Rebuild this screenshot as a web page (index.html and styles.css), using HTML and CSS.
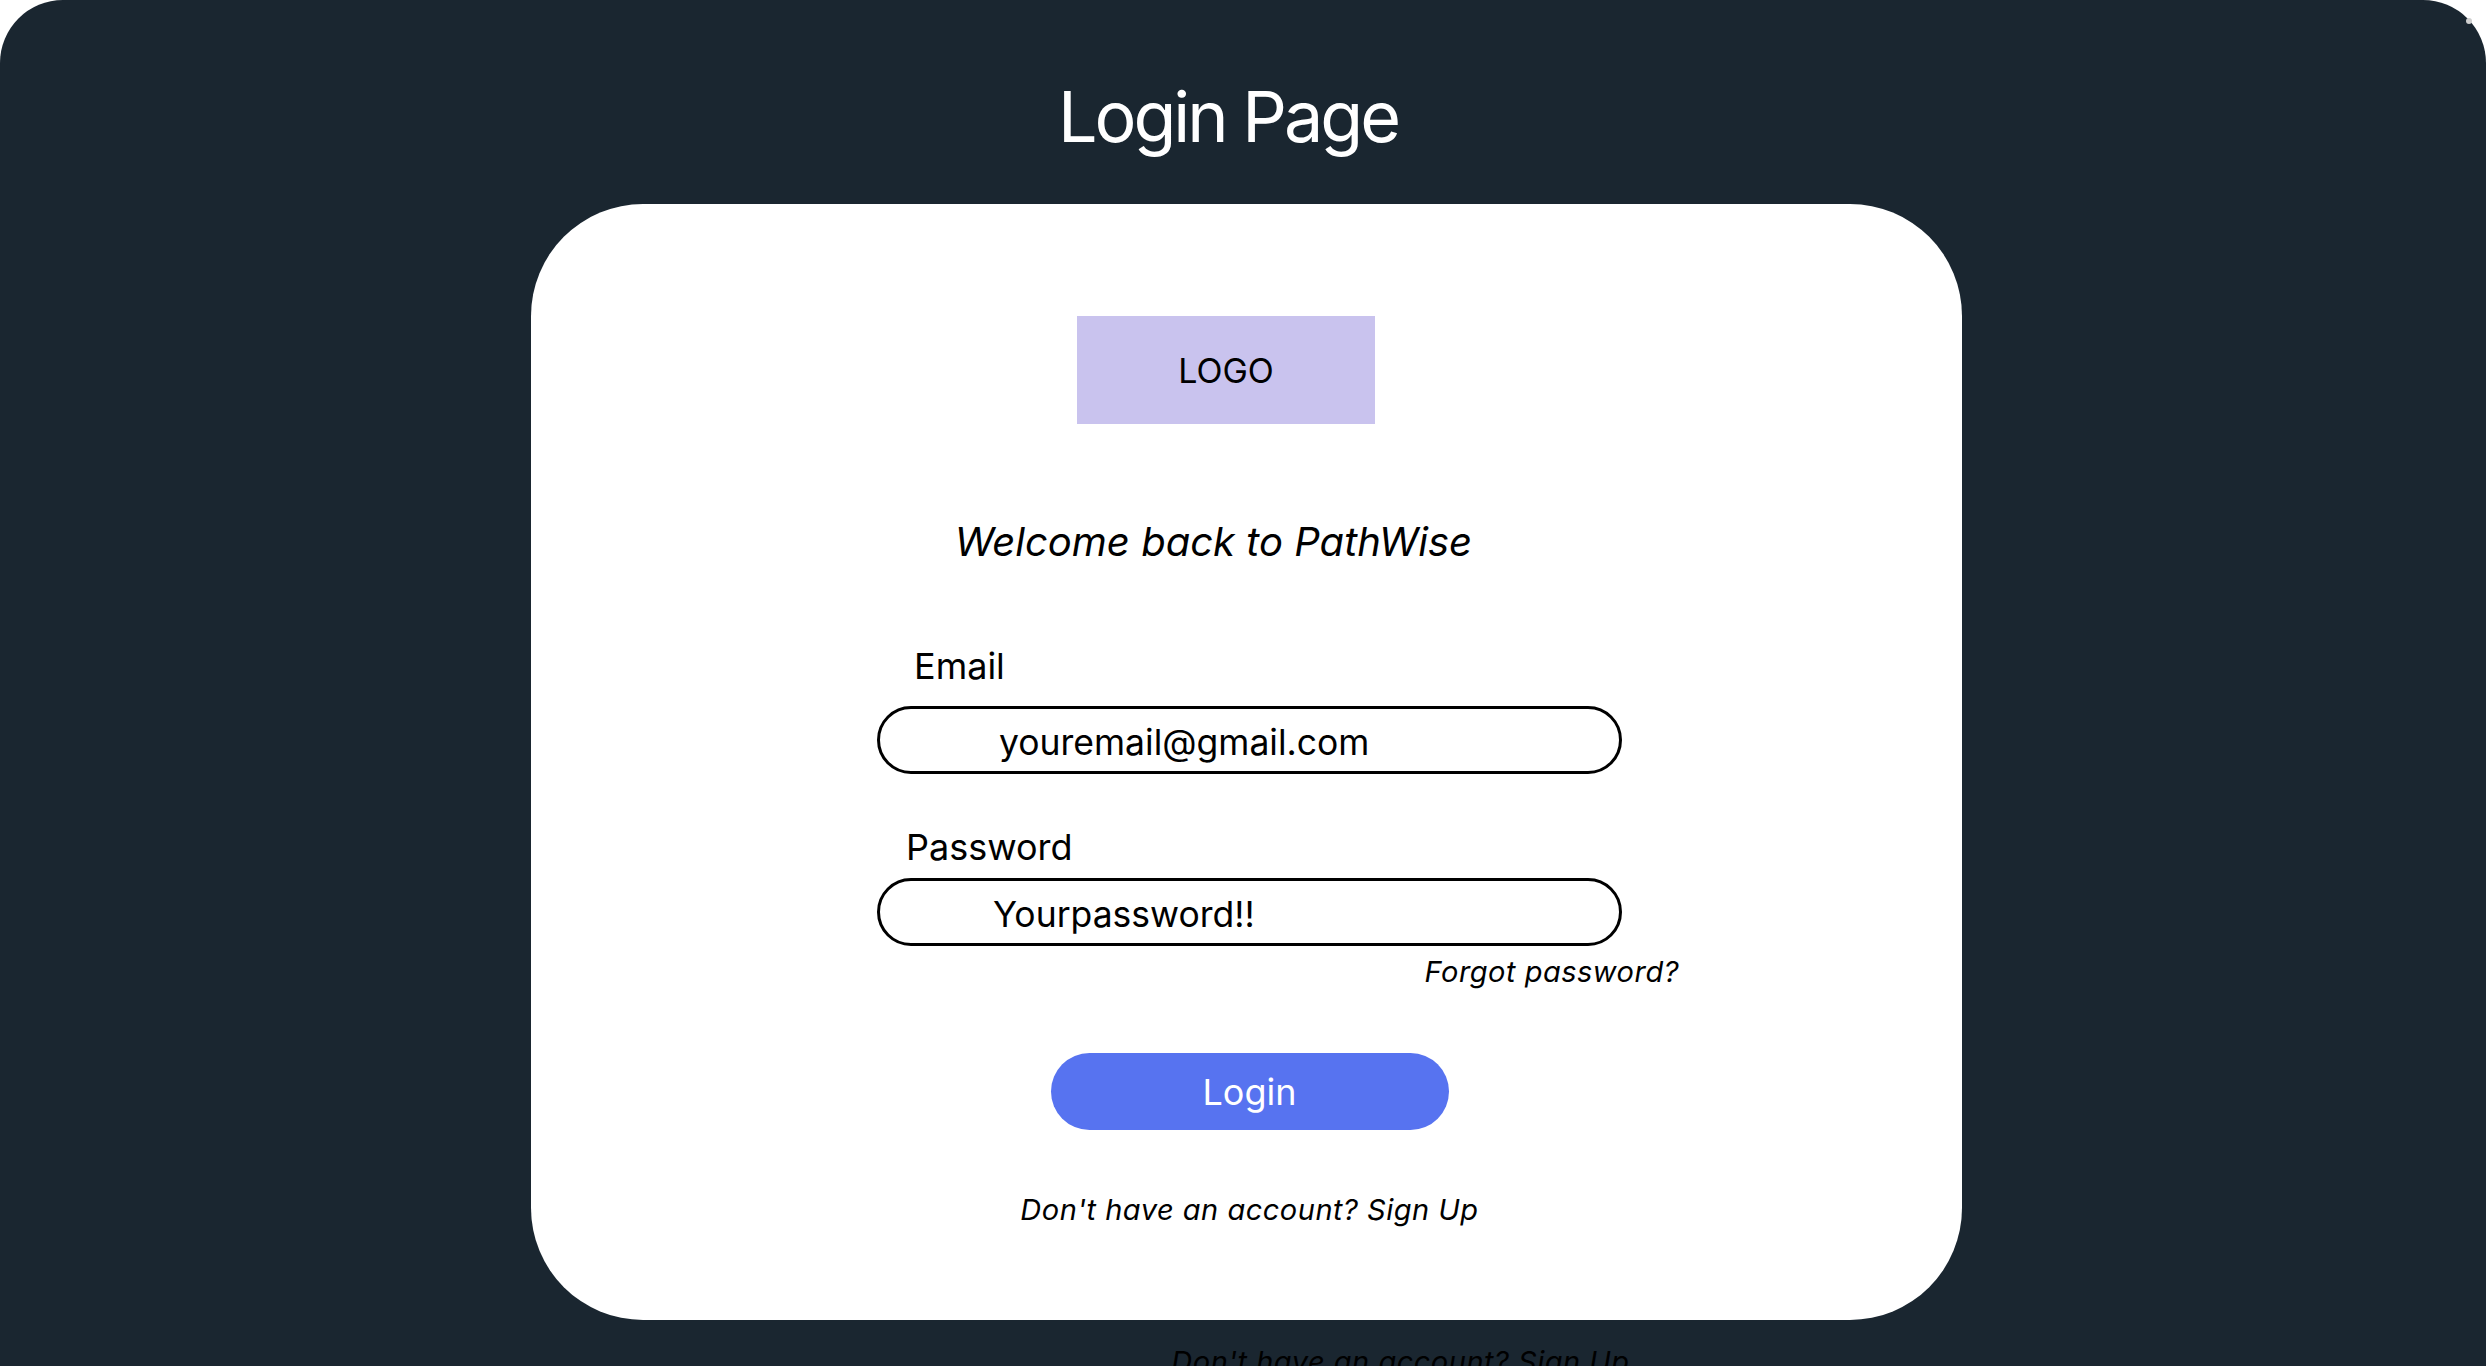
FILE: index.html
```html
<!DOCTYPE html>
<html lang="en">
<head>
<meta charset="utf-8">
<title>Login Page</title>
<link rel="stylesheet" href="styles.css">
</head>
<body>
<div class="screen">
  <h1 class="title">Login Page</h1>
  <main class="card">
    <div class="logo">LOGO</div>
    <p class="welcome">Welcome back to PathWise</p>
    <form class="form">
      <label class="label label-email">Email</label>
      <div class="field field-email">youremail@gmail.com</div>
      <label class="label label-password">Password</label>
      <div class="field field-password">Yourpassword!!</div>
      <a class="forgot">Forgot password?</a>
      <button type="button" class="login">Login</button>
      <p class="signup">Don't have an account? Sign Up</p>
    </form>
  </main>
  <p class="signup signup-ghost">Don't have an account? Sign Up</p>
</div>
<span class="corner-dot"></span>
</body>
</html>
```
FILE: styles.css
```css
* { box-sizing: border-box; }
html, body {
  margin: 0;
  padding: 0;
  background: #ffffff;
  overflow: hidden;
}
body {
  font-family: Inter, "Noto Sans", sans-serif;
  color: #000;
}
.screen {
  width: 100%;
  min-height: 1460px;
  background: #1a2630;
  border-radius: 63px;
  display: flex;
  flex-direction: column;
  align-items: center;
  padding-top: 75px;
}
.title {
  margin: 0 30px 0 0;
  font-size: 70px;
  line-height: 1.2;
  font-weight: 400;
  letter-spacing: -3px;
  color: #ffffff;
}
.card {
  margin: 45px 0 0 7px;
  width: 1431px;
  background: #ffffff;
  border-radius: 112px;
  display: flex;
  flex-direction: column;
  align-items: center;
  padding: 112px 0 92px;
}
.logo {
  width: 298px;
  height: 108px;
  background: #c9c3ee;
  display: flex;
  align-items: center;
  justify-content: center;
  font-size: 34px;
  margin-right: 41px;
}
.welcome {
  margin: 94px 66px 0 0;
  font-size: 40px;
  line-height: 1.2;
  font-style: italic;
}
.form {
  width: 745px;
  margin-left: 6px;
  display: flex;
  flex-direction: column;
}
.label {
  font-size: 36px;
  line-height: 1.2;
}
.label-email { margin: 79px 0 0 37px; }
.label-password { margin: 52px 0 0 29px; }
.field {
  height: 68px;
  border: 3px solid #000;
  border-radius: 34px;
  display: flex;
  align-items: center;
  font-size: 35.5px;
  padding-top: 5px;
}
.field-email { margin-top: 18px; padding-left: 119px; }
.field-password { margin-top: 9px; padding-left: 113px; }
.forgot {
  align-self: flex-end;
  margin: 9px -57px 0 0;
  font-size: 29px;
  line-height: 1.2;
  letter-spacing: 0.5px;
  font-style: italic;
}
.login {
  align-self: center;
  margin-top: 63px;
  width: 398px;
  height: 77px;
  border: none;
  border-radius: 39px;
  background: #5773f0;
  color: #ffffff;
  font-family: Inter, "Noto Sans", sans-serif;
  font-size: 36px;
  padding: 0;
}
.signup {
  align-self: center;
  margin: 63px 0 0;
  font-size: 29px;
  line-height: 1.2;
  letter-spacing: 0.5px;
  font-style: italic;
}
.signup-ghost {
  margin: 25px 0 0 315px;
  color: #000;
}
.corner-dot {
  position: absolute;
  left: 2466px;
  top: 18px;
  width: 6px;
  height: 6px;
  border-radius: 50%;
  background: #cfcfcf;
}
```
